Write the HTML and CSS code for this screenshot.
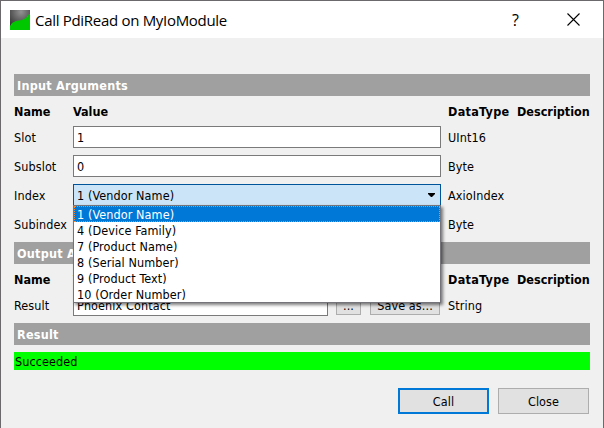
FILE: index.html
```html
<!DOCTYPE html>
<html lang="en">
<head>
<meta charset="utf-8">
<title>Call PdiRead on MyIoModule</title>
<link rel="stylesheet" href="styles.css">
</head>
<body>
<div class="dialog">
  <header class="titlebar">
    <svg class="app-icon" width="20" height="20" viewBox="0 0 20 20">
      <defs><radialGradient id="g" cx=".55" cy=".1" r=".8"><stop offset="0" stop-color="#929292"/><stop offset="1" stop-color="#333"/></radialGradient></defs>
      <rect width="20" height="20" fill="url(#g)"/>
      <path d="M0 20V16L2 13L6 11L12 10L16 8L18 5L20 4V20Z" fill="#00c800"/>
    </svg>
    <h1 class="title"><span>Call PdiRead on MyIoModule</span></h1>
    <span class="help">?</span>
    <svg class="close" width="13" height="13" viewBox="0 0 13 13"><path d="M.5 .5L12.5 12.5M12.5 .5L.5 12.5" stroke="#000" stroke-width="1.1" fill="none"/></svg>
  </header>
  <main class="content">
    <h2 class="section">Input Arguments</h2>
    <div class="row head"><span>Name</span><span>Value</span><span class="type">DataType</span><span>Description</span></div>
    <div class="row field"><span>Slot</span><div class="input">1</div><span>UInt16</span></div>
    <div class="row field"><span>Subslot</span><div class="input">0</div><span>Byte</span></div>
    <div class="row field"><span>Index</span>
      <div class="combo">1 (Vendor Name)
        <svg class="arrow" width="7" height="4" viewBox="0 0 7 4"><path d="M0 0H7V1L4 4H3L0 1Z"/></svg>
        <ul class="menu">
          <li class="selected">1 (Vendor Name)</li><li>4 (Device Family)</li><li>7 (Product Name)</li><li>8 (Serial Number)</li><li>9 (Product Text)</li><li>10 (Order Number)</li>
        </ul>
      </div>
      <span>AxioIndex</span></div>
    <div class="row field"><span>Subindex</span><div class="input"></div><span>Byte</span></div>
    <h2 class="section">Output Arguments</h2>
    <div class="row head"><span>Name</span><span>Value</span><span class="type">DataType</span><span>Description</span></div>
    <div class="row field"><span>Result</span>
      <div class="output"><div class="input">Phoenix Contact</div><div class="tool browse">...</div><div class="tool save">Save as...</div></div>
      <span>String</span></div>
    <h2 class="section">Result</h2>
    <div class="status">Succeeded</div>
    <footer class="actions"><button class="btn primary">Call</button><button class="btn">Close</button></footer>
  </main>
</div>
</body>
</html>
```

FILE: styles.css
```css
* { box-sizing: border-box; }
body { margin: 0; }
.dialog {
  width: 604px; height: 428px; overflow: hidden;
  border: 1px solid #6b696b; border-bottom: 0;
  background: #f0f0f0; color: #000;
  font: 12.5px/16px "DejaVu Sans Condensed", "DejaVu Sans", sans-serif;
  font-stretch: condensed;
  letter-spacing: .1px;
}
.titlebar { display: flex; align-items: center; height: 37px; padding: 0 23px 0 9px; background: #fff; }
.title { flex: 1; margin: 0 0 0 5px; font: 15px/20px "Open Sans", sans-serif; letter-spacing: -.3px; }
.help { font: 16px/20px "Open Sans", sans-serif; letter-spacing: 0; margin-right: 48px; }
.content { padding: 36px 13px 0; }
.section {
  height: 22px; margin: 0 0 7px; padding-left: 3px;
  background: #a0a0a0; color: #fff; font-size: 12.5px; line-height: 23px; font-weight: bold; letter-spacing: .25px;
}
.row { display: grid; grid-template-columns: 59px 368px 62px 73px; align-items: center; white-space: nowrap; }
.row > :nth-child(3) { margin-left: 7px; }
.row > :nth-child(4) { margin-left: 14px; }
.head { font-weight: bold; height: 16px; margin-bottom: 7px; letter-spacing: 0; }
.head > span { line-height: 18px; height: 16px; }
.head .type { letter-spacing: .3px; }
.field { height: 22px; margin-bottom: 7px; }
.field > span { line-height: 24px; height: 22px; }
.input, .combo { height: 22px; border: 1px solid #7a7a7a; background: #fff; padding: 3px 3px 1px; }
.combo { position: relative; border-color: #005499; background: #cce4f7; }
.arrow { position: absolute; right: 5px; top: 8px; }
.menu {
  position: absolute; z-index: 2; left: -1px; top: 20px; width: 368px;
  margin: 0; padding: 0; list-style: none;
  border: 1px solid #74747a; background: #fff; box-shadow: 2px 2px 3px rgba(0,0,0,.5);
}
.menu li { height: 16px; padding: 0 3px; line-height: 18px; }
.menu .selected { background: #0078d7; color: #fff; outline: 1px dotted #ff8728; outline-offset: -1px; }
.output { display: grid; grid-template-columns: 255px 25px 70px; column-gap: 8px; align-items: center; }
.tool { height: 20px; border: 1px solid #adadad; background: #e1e1e1; text-align: center; line-height: 19px; }
.save { margin-left: 1px; width: 70px; }
.status { height: 18px; padding-left: 1px; background: #0f0; line-height: 20px; }
.actions { display: flex; justify-content: flex-end; gap: 9px; margin: 18px 1px 0; }
.btn { width: 91px; height: 26px; padding: 2px 0 0; border: 1px solid #adadad; background: #e1e1e1; color: #000; font: inherit; letter-spacing: .1px; }
.primary { border: 2px solid #0078d7; }
```
